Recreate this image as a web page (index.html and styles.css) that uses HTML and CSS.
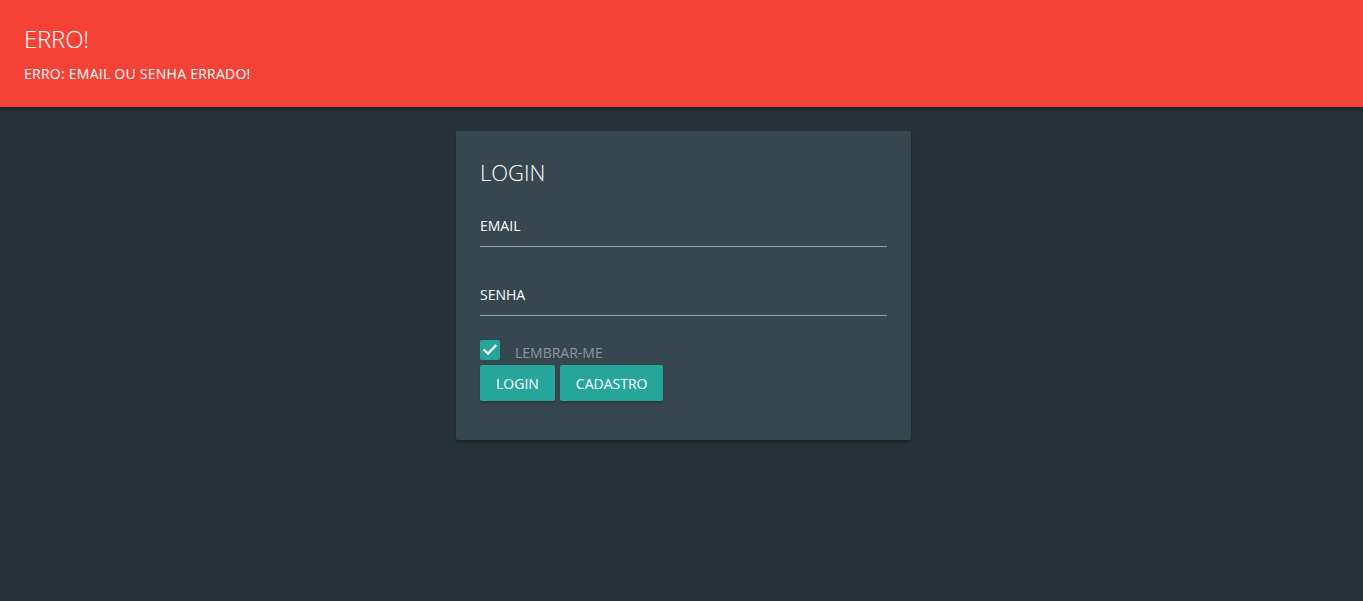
FILE: index.html
```html
<!DOCTYPE html>
<html lang="pt">
<head>
<meta charset="utf-8">
<title>Login</title>
<link rel="stylesheet" href="styles.css">
</head>
<body>
<div class="alert">
  <h1 class="alert-title">ERRO!</h1>
  <p class="alert-text">ERRO: EMAIL OU SENHA ERRADO!</p>
</div>
<main class="page">
  <form class="card">
    <h2 class="card-title">LOGIN</h2>
    <div class="field"><input class="input" type="text" placeholder="EMAIL"></div>
    <div class="field"><input class="input" type="password" placeholder="SENHA"></div>
    <label class="remember">
      <span class="checkbox">
        <svg width="20" height="20" viewBox="0 0 20 20"><path d="M4.5 10.2 L8 13.6 L15.5 5.8" fill="none" stroke="#fff" stroke-width="2.2" stroke-linecap="square"/></svg>
      </span>
      <span class="remember-text">LEMBRAR-ME</span>
    </label>
    <div class="actions">
      <button class="btn" type="button">LOGIN</button>
      <button class="btn" type="button">CADASTRO</button>
    </div>
  </form>
</main>
</body>
</html>
```
FILE: styles.css
```css
html, body {
  margin: 0;
  padding: 0;
  height: 100%;
}
body {
  background: #263238;
  font-family: "Open Sans", "Noto Sans", "Liberation Sans", sans-serif;
  color: #fff;
}
.alert {
  background: #f44336;
  height: 107px;
  box-sizing: border-box;
  padding: 23px 24px 0 24px;
  box-shadow: 0 2px 4px rgba(0,0,0,0.35);
  position: relative;
  z-index: 1;
}
.alert-title {
  margin: 0;
  font-weight: 300;
  font-size: 24px;
  line-height: 32px;
  letter-spacing: -0.2px;
}
.alert-text {
  margin: 8px 0 0 0;
  font-size: 14px;
  line-height: 22px;
  letter-spacing: 0.25px;
}
.page {
  display: flex;
  justify-content: center;
  padding-top: 24px;
  padding-left: 4px;
}
.card {
  width: 455px;
  box-sizing: border-box;
  background: #37474f;
  border-radius: 2px;
  padding: 25px 24px 39px 24px;
  box-shadow: 0 2px 3px rgba(0,0,0,0.3);
  display: flex;
  flex-direction: column;
}
.card-title {
  margin: 0;
  font-weight: 300;
  font-size: 22px;
  line-height: 32px;
  letter-spacing: 0;
}
.field {
  margin-top: 15px;
}
.field + .field {
  margin-top: 25px;
}
.input {
  display: block;
  width: 100%;
  box-sizing: border-box;
  height: 44px;
  border: 0;
  border-bottom: 1px solid #9e9e9e;
  background: transparent;
  color: #fff;
  font-family: inherit;
  font-size: 14px;
  padding: 2px 0 0 0;
  outline: none;
}
.input::placeholder {
  color: #fff;
  opacity: 1;
}
.remember {
  display: flex;
  margin-top: 25px;
  height: 24px;
  align-items: flex-start;
}
.checkbox {
  width: 20px;
  height: 20px;
  margin-top: -1px;
  background: #26a69a;
  border-radius: 2px;
  display: flex;
}
.remember-text {
  margin-left: 15px;
  color: #8a969c;
  font-size: 14px;
  line-height: 22px;
  margin-top: 1px;
  letter-spacing: 0;
}
.actions {
  display: flex;
  gap: 5px;
}
.btn {
  height: 36px;
  border: 0;
  border-radius: 2px;
  background: #26a69a;
  color: #fff;
  font-family: inherit;
  font-size: 14px;
  padding: 0 16px;
  letter-spacing: 0;
  box-shadow: 0 2px 2px rgba(0,0,0,0.2);
}
```
